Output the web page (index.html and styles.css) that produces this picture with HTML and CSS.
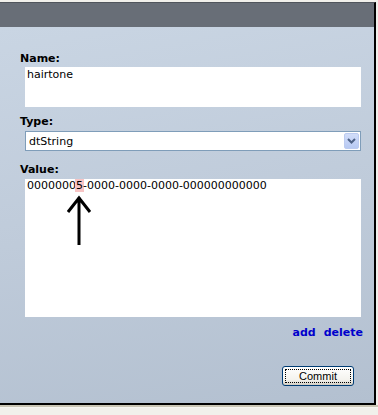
FILE: index.html
```html
<!DOCTYPE html>
<html lang="en">
<head>
  <meta charset="UTF-8">
  <title>Attribute</title>
  <link rel="stylesheet" href="styles.css">
</head>
<body>
  <div class="panel">
    <div class="panel-header"></div>
    <div class="panel-body">
      <div class="label">Name:</div>
      <div class="field name-field">hairtone</div>

      <div class="label type-label">Type:</div>
      <div class="select">
        <span class="select-text">dtString</span>
        <span class="select-btn">
          <svg width="9" height="6" viewBox="0 0 9 6"><path d="M1 1 L4.5 4.5 L8 1" fill="none" stroke="#4d6185" stroke-width="2"/></svg>
        </span>
      </div>

      <div class="label value-label">Value:</div>
      <div class="field value-field">0000000<span class="mark">5</span>-0000-0000-0000-000000000000
        <svg class="pointer" width="30" height="52" viewBox="0 0 30 52">
          <path d="M12 2 L12 50 M1 17 L12 3 L23 17" fill="none" stroke="#000" stroke-width="3"/>
        </svg>
      </div>

      <div class="links">
        <a href="#">add</a>
        <a href="#">delete</a>
      </div>

      <div class="actions">
        <button class="commit-btn"><span>Commit</span></button>
      </div>
    </div>
  </div>
  <div class="status"></div>
</body>
</html>
```

FILE: styles.css
```css
body {
  margin: 0;
  background-color: #f1f0eb;
  font-family: "DejaVu Sans", Verdana, sans-serif;
  font-size: 11px;
}
.panel {
  margin-top: 2px;
  width: 374px;
  border-top: 1px solid #50555c;
  border-right: 2px solid #000;
  border-bottom: 2px solid #000;
}
.panel-header {
  height: 24px;
  background-color: #686e77;
}
.panel-body {
  height: 376px;
  padding: 25px 0 0 20px;
  box-sizing: border-box;
  background: linear-gradient(170deg, #c9d5e3 0%, #bfcbda 50%, #b3c0d0 100%);
}
.label {
  font-weight: bold;
  line-height: 13px;
  color: #000;
}
.type-label {
  margin-top: 8px;
}
.value-label {
  margin-top: 12px;
}
.field {
  position: relative;
  margin: 2px 0 0 5px;
  width: 336px;
  height: 40px;
  padding: 1px 2px;
  box-sizing: border-box;
  background-color: #fff;
  line-height: 13px;
  color: #000;
}
.value-field {
  margin-top: 3px;
  height: 138px;
  padding-top: 0;
}
.mark {
  display: inline-block;
  height: 13px;
  background-color: #f8c4c4;
  padding: 0 1px;
  margin: 0 -1px;
}
.pointer {
  position: absolute;
  left: 42px;
  top: 16px;
}
.select {
  display: flex;
  align-items: center;
  justify-content: space-between;
  margin: 3px 0 0 5px;
  width: 336px;
  height: 20px;
  box-sizing: border-box;
  border: 1px solid #7f9db9;
  background-color: #fff;
  padding: 0 1px 0 3px;
}
.select-btn {
  display: flex;
  align-items: center;
  justify-content: center;
  width: 15px;
  height: 16px;
  box-sizing: border-box;
  border: 1px solid #bccbf0;
  border-radius: 2px;
  background: linear-gradient(#d2ddf9, #b7c9f3);
}
.links {
  display: flex;
  justify-content: flex-end;
  gap: 8px;
  margin: 9px 11px 0 0;
  line-height: 13px;
}
.links a {
  color: #0000cc;
  font-weight: bold;
  text-decoration: none;
}
.actions {
  display: flex;
  justify-content: flex-end;
  margin: 27px 20px 0 0;
}
.commit-btn {
  width: 72px;
  height: 20px;
  padding: 2px;
  border: 1px solid #003c74;
  border-radius: 3px;
  background: linear-gradient(#ffffff, #f4f3ee 70%, #d6d0c5);
  box-shadow: inset 0 -1px 0 #d6d0c5;
  font-family: "Liberation Sans", Arial, sans-serif;
  font-size: 11px;
  color: #000;
}
.commit-btn span {
  display: block;
  height: 100%;
  line-height: 12px;
  border: 1px dotted #000;
  box-sizing: border-box;
}
.status {
  height: 2px;
  border-bottom: 1px solid #f6f5f0;
  background-color: #c9c5b4;
  box-shadow: 0 2px 0 #bdbaae;
}
```
